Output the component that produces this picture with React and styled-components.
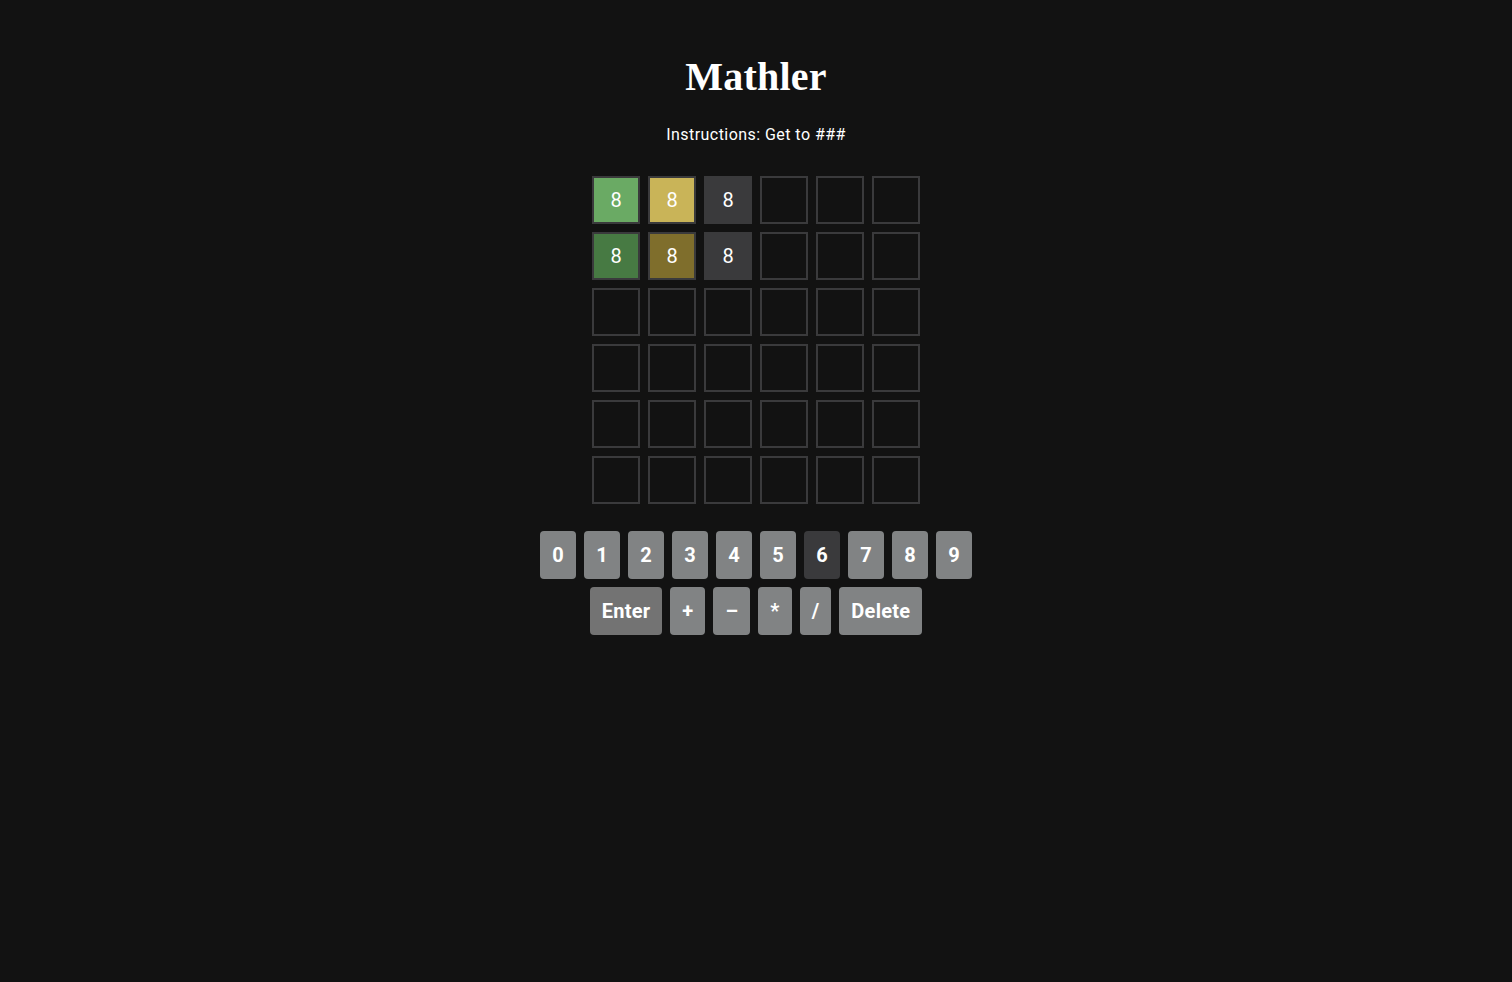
import React from 'react'
import styled, { createGlobalStyle } from 'styled-components'

const GlobalStyle = createGlobalStyle`
  html, body {
    margin: 0;
    padding: 0;
    background: #121212;
    min-height: 100%;
  }
  body {
    font-family: Roboto, 'Liberation Sans', sans-serif;
    color: #fff;
  }
`

const Page = styled.div`
	display: flex;
	flex-direction: column;
	align-items: center;
	min-height: 982px;
	background: #121212;
	padding-top: 56px;
	box-sizing: border-box;
`

const Title = styled.h1`
	margin: 0;
	font-family: 'Liberation Serif', 'DejaVu Serif', serif;
	font-weight: 700;
	font-size: 40px;
	line-height: 42px;
	color: #fff;
	letter-spacing: 0.2px;
`

const Instructions = styled.p`
	margin: 25px 0 0;
	font-size: 16px;
	line-height: 24px;
	letter-spacing: 0.45px;
	color: #fff;
`

const Grid = styled.div`
	display: grid;
	grid-template-columns: repeat(6, 48px);
	grid-auto-rows: 48px;
	gap: 8px;
	margin-top: 29px;
`

const tileColors = {
	correct: '#6aaa64',
	present: '#c9b458',
	absent: '#3a3a3c',
	correctDim: '#477a43',
	presentDim: '#7f6e2c',
	empty: 'transparent',
}

const Tile = styled.div`
	display: flex;
	align-items: center;
	justify-content: center;
	box-sizing: border-box;
	border: 2px solid #3a3a3c;
	background: ${(p) => tileColors[p.status] || 'transparent'};
	color: #fff;
	font-size: 20px;
	line-height: 1;
`

const Keyboard = styled.div`
	display: flex;
	flex-direction: column;
	align-items: center;
	gap: 8px;
	margin-top: 27px;
`

const KeyRow = styled.div`
	display: flex;
	gap: 8px;
`

const Key = styled.button`
	height: 48px;
	min-width: ${(p) => (p.$digit ? '36px' : '0')};
	padding: 0 12px;
	border: none;
	border-radius: 4px;
	background: ${(p) => (p.$used ? '#3a3a3c' : p.$enter ? '#737373' : '#818384')};
	color: #fff;
	font-family: Roboto, 'Liberation Sans', sans-serif;
	font-weight: 700;
	font-size: 20px;
	letter-spacing: ${(p) => (p.$digit ? '0' : '0.25px')};
	cursor: pointer;
`

const rows = [
	['correct', 'present', 'absent', 'empty', 'empty', 'empty'],
	['correctDim', 'presentDim', 'absent', 'empty', 'empty', 'empty'],
	['empty', 'empty', 'empty', 'empty', 'empty', 'empty'],
	['empty', 'empty', 'empty', 'empty', 'empty', 'empty'],
	['empty', 'empty', 'empty', 'empty', 'empty', 'empty'],
	['empty', 'empty', 'empty', 'empty', 'empty', 'empty'],
]

const digits = ['0', '1', '2', '3', '4', '5', '6', '7', '8', '9']
const ops = ['+', '–', '*', '/']

const App = () => {
	return (
		<Page>
			<GlobalStyle />
			<Title>Mathler</Title>
			<Instructions>Instructions: Get to ###</Instructions>
			<Grid>
				{rows.map((row, r) =>
					row.map((status, c) => (
						<Tile key={`${r}-${c}`} status={status}>
							{status !== 'empty' ? '8' : ''}
						</Tile>
					))
				)}
			</Grid>
			<Keyboard>
				<KeyRow>
					{digits.map((d) => (
						<Key key={d} $digit $used={d === '6'}>
							{d}
						</Key>
					))}
				</KeyRow>
				<KeyRow>
					<Key $enter>Enter</Key>
					{ops.map((o) => (
						<Key key={o}>{o}</Key>
					))}
					<Key>Delete</Key>
				</KeyRow>
			</Keyboard>
		</Page>
	)
}

export default App
